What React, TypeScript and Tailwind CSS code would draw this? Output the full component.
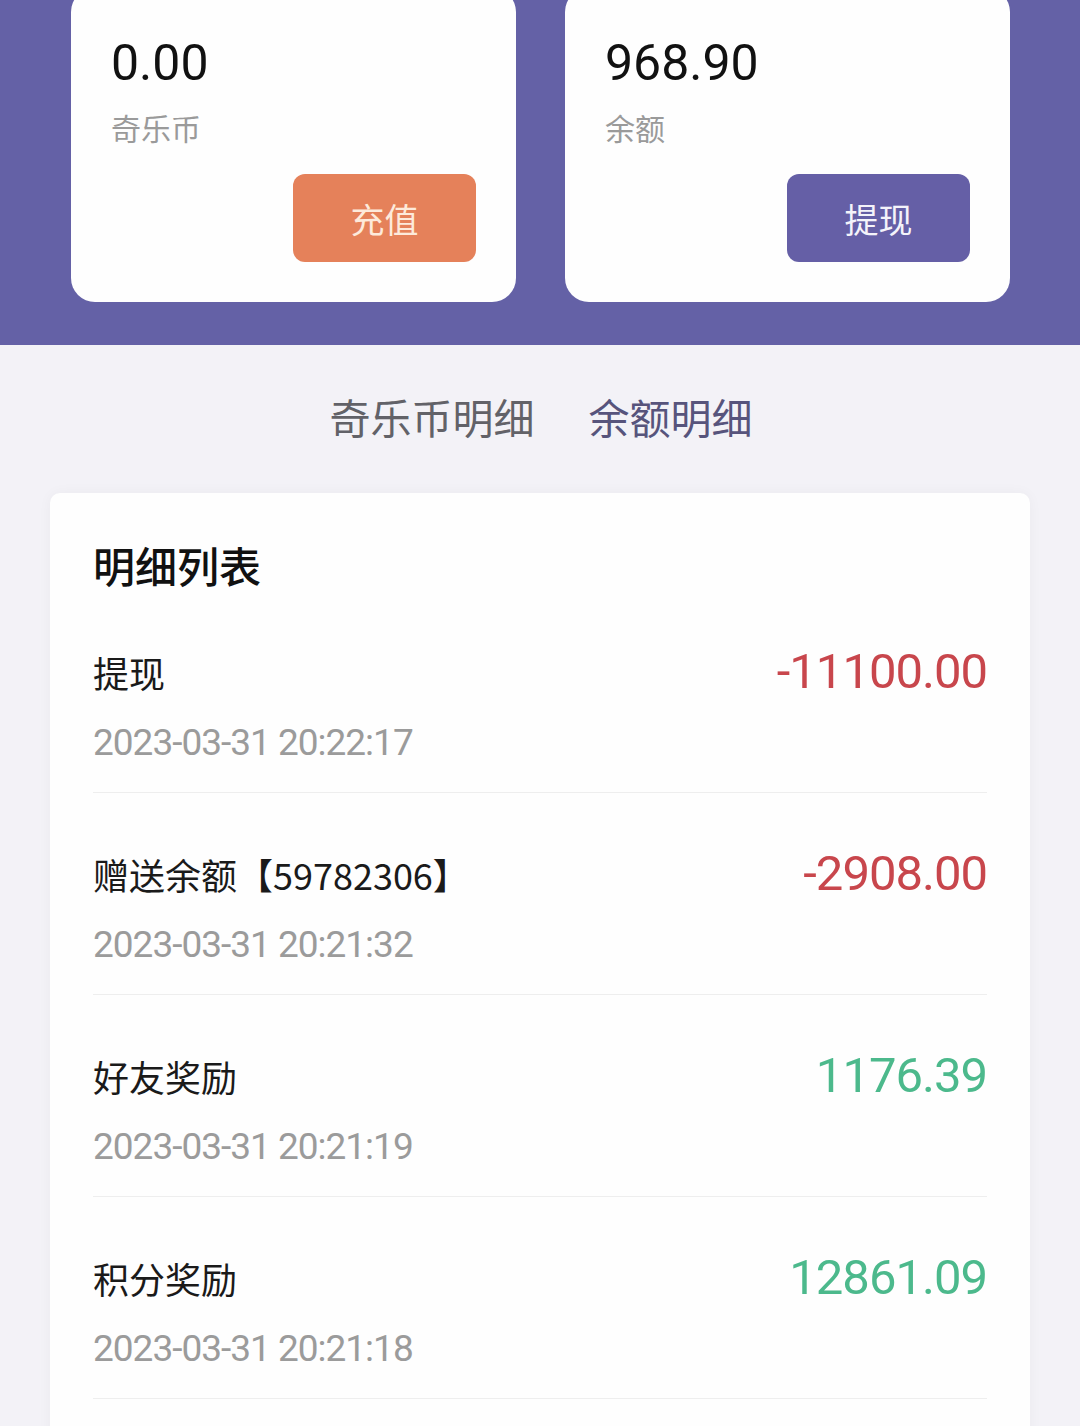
const CJK = "font-['Noto_Sans_CJK_SC','Noto_Sans',sans-serif]"
const NUM = "font-['Roboto','Noto_Sans_CJK_SC',sans-serif]"

const records = [
  { title: '提现', amount: '-11100.00', time: '2023-03-31 20:22:17', income: false },
  { title: '赠送余额【59782306】', amount: '-2908.00', time: '2023-03-31 20:21:32', income: false },
  { title: '好友奖励', amount: '1176.39', time: '2023-03-31 20:21:19', income: true },
  { title: '积分奖励', amount: '12861.09', time: '2023-03-31 20:21:18', income: true },
]

function WalletCard({ value, label, action, btnClass }: { value: string; label: string; action: string; btnClass: string }) {
  return (
    <div className="flex h-[314px] flex-1 flex-col rounded-[24px] bg-[#fefefe] px-[40px] pt-[50px] pb-[40px]">
      <div className={`${NUM} text-[50px] leading-[50px] text-[#111]`}>{value}</div>
      <div className={`${CJK} mt-[24px] text-[30px] leading-[30px] text-[#9a9a9a]`}>{label}</div>
      <div className="mt-[32px] flex justify-end">
        <button className={`${CJK} flex h-[88px] w-[183px] items-center justify-center rounded-[12px] text-[34px] ${btnClass}`}>
          {action}
        </button>
      </div>
    </div>
  )
}

export default function App() {
  return (
    <div className="min-h-[1426px] overflow-hidden bg-[#f3f2f7]">
      {/* top purple area */}
      <div className="flex h-[345px] flex-col bg-[#6461a6] pl-[71px] pr-[70px]">
        <div className="-mt-[12px] flex gap-[49px]">
          <WalletCard value="0.00" label="奇乐币" action="充值" btnClass="bg-[#e5815a] text-[#fdeadb]" />
          <WalletCard value="968.90" label="余额" action="提现" btnClass="bg-[#655fa6] text-[#f4f3fa]" />
        </div>
      </div>

      {/* tabs */}
      <div className={`${CJK} mt-[51px] flex justify-center gap-[54px] pl-[2px] text-[41px] leading-[41px]`}>
        <span className="text-[#626268]">奇乐币明细</span>
        <span className="text-[#57547c]">余额明细</span>
      </div>

      {/* list */}
      <div className="mx-[50px] mt-[56px] rounded-[10px] bg-[#fefefe] px-[43px] pt-[51px] pb-[80px] shadow-[0_0_14px_rgba(0,0,0,0.04)]">
        <div className={`${CJK} mb-[5px] text-[42px] leading-[42px] font-medium text-[#111]`}>明细列表</div>
        {records.map(r => (
          <div key={r.time} className="border-b border-[#eeeeee] pt-[57px] pb-[31px]">
            <div className="flex items-baseline justify-between leading-[48px]">
              <span className={`${CJK} text-[36px] text-[#1a1a1a]`}>{r.title}</span>
              <span className={`${NUM} text-[49px] tracking-[-1px] ${r.income ? 'text-[#4cb98c]' : 'text-[#c8464c]'}`}>
                {r.amount}
              </span>
            </div>
            <div className={`${NUM} mt-[28px] text-[37px] leading-[37px] tracking-[-1px] text-[#9b9b9b]`}>{r.time}</div>
          </div>
        ))}
      </div>
    </div>
  )
}
